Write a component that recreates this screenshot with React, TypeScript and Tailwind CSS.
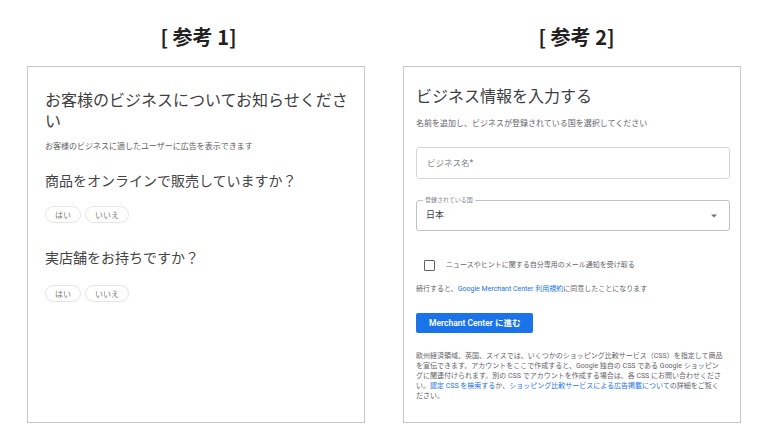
import React from "react";

const jp = "font-['Noto_Sans_CJK_JP',sans-serif]";
const rb = "font-['Roboto','Noto_Sans_CJK_JP',sans-serif]";

function Chip({ label }: { label: string }) {
  return (
    <div className="h-[17px] px-[9px] rounded-full border border-[#e4e4e4] flex items-center text-[8px] leading-none text-[#7a7a7a]">
      {label}
    </div>
  );
}

function Card1() {
  return (
    <div className={`flex-1 h-[357px] border border-[#c6c6c6] bg-white pl-[17px] pt-[22px] ${jp}`}>
      <div className="text-[16px] leading-[21px] text-[#3f3f3f] whitespace-nowrap">
        <div>お客様のビジネスについてお知らせくださ</div>
        <div>い</div>
      </div>
      <div className="mt-[9px] text-[8px] leading-[12px] text-[#606060] whitespace-nowrap">
        お客様のビジネスに適したユーザーに広告を表示できます
      </div>
      <div className="mt-[18px] text-[14px] leading-[20px] text-[#444]">
        商品をオンラインで販売していますか？
      </div>
      <div className="mt-[16px] flex gap-[4px]">
        <Chip label="はい" />
        <Chip label="いいえ" />
      </div>
      <div className="mt-[24px] text-[14px] leading-[20px] text-[#444]">
        実店舗をお持ちですか？
      </div>
      <div className="mt-[18px] flex gap-[4px]">
        <Chip label="はい" />
        <Chip label="いいえ" />
      </div>
    </div>
  );
}

function Card2() {
  return (
    <div className={`flex-1 h-[357px] border border-[#c6c6c6] bg-white pl-[12px] pr-[10px] pt-[20px] ${rb}`}>
      <div className="text-[16px] leading-[20px] text-[#3c4043] whitespace-nowrap">
        ビジネス情報を入力する
      </div>
      <div className="mt-[11px] text-[8px] leading-[12px] text-[#5f6368] whitespace-nowrap">
        名前を追加し、ビジネスが登録されている国を選択してください
      </div>
      <div className="mt-[17px] h-[32px] border border-[#d4d6d9] rounded-[3px] flex items-center px-[10px] text-[8.5px] text-[#80868b]">
        ビジネス名*
      </div>
      <div className="relative mt-[21px] h-[31px] border border-[#bfc2c6] rounded-[3px] flex items-center justify-between pl-[9px] pr-[12px]">
        <span className="absolute left-[6px] -top-[5px] bg-white px-[2px] text-[6px] leading-[8px] text-[#80868b] whitespace-nowrap">
          登録されている国
        </span>
        <span className="text-[9px] text-[#3c4043]">日本</span>
        <svg width="6" height="4" viewBox="0 0 6 4">
          <path d="M0 0.5 L6 0.5 L3 3.5 Z" fill="#6b6f73" />
        </svg>
      </div>
      <div className="mt-[27px] h-[14px] flex items-center pl-[8px]">
        <div className="w-[11px] h-[11px] border-[1.5px] border-[#5f6368] rounded-[1px]" />
        <span className="ml-[11px] text-[7px] text-[#5f6368] whitespace-nowrap">
          ニュースやヒントに関する自分専用のメール通知を受け取る
        </span>
      </div>
      <div className="mt-[12px] text-[7px] leading-[10px] text-[#5f6368] whitespace-nowrap">
        続行すると、<span className="text-[#1a73e8]">Google Merchant Center 利用規約</span>に同意したことになります
      </div>
      <div className="mt-[19px] flex">
        <div className="h-[20px] px-[13px] rounded-[2px] bg-[#1a73e8] flex items-center text-[8.5px] font-semibold text-white whitespace-nowrap">
          Merchant Center に進む
        </div>
      </div>
      <div className="mt-[18px] text-[7px] leading-[10px] text-[#5f6368] whitespace-nowrap">
        <div>欧州経済領域、英国、スイスでは、いくつかのショッピング比較サービス（CSS）を指定して商品</div>
        <div>を宣伝できます。アカウントをここで作成すると、Google 独自の CSS である Google ショッピン</div>
        <div>グに関連付けられます。別の CSS でアカウントを作成する場合は、各 CSS にお問い合わせくださ</div>
        <div>
          い。<span className="text-[#1a73e8]">認定 CSS を検索する</span>か、
          <span className="text-[#1a73e8]">ショッピング比較サービスによる広告掲載について</span>の詳細をご覧く
        </div>
        <div>ださい。</div>
      </div>
    </div>
  );
}

export default function App() {
  return (
    <div className={`w-[768px] h-[448px] bg-white flex gap-[38px] px-[27px] pt-[23px] ${jp}`}>
      <div className="flex-1 flex flex-col">
        <div className="h-[28px] flex justify-center pl-[5px] text-[20px] leading-[28px] font-bold text-[#222]">
          [ 参考 1]
        </div>
        <div className="mt-[15px] flex">
          <Card1 />
        </div>
      </div>
      <div className="flex-1 flex flex-col">
        <div className="h-[28px] flex justify-center pl-[9px] text-[20px] leading-[28px] font-bold text-[#222]">
          [ 参考 2]
        </div>
        <div className="mt-[15px] flex">
          <Card2 />
        </div>
      </div>
    </div>
  );
}
